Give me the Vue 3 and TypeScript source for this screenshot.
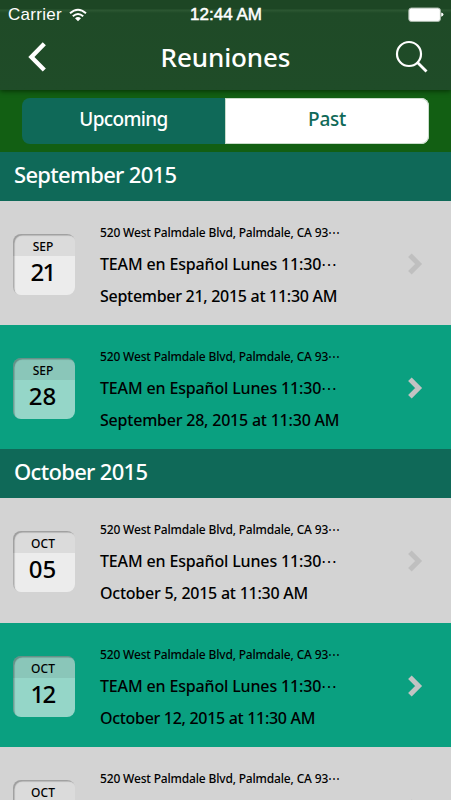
<script setup lang="ts">
interface Meeting {
  month: string
  day?: string
  address: string
  title?: string
  when?: string
}

interface Section {
  label: string
  meetings: Meeting[]
}

const address = '520 West Palmdale Blvd, Palmdale, CA 93⋯'
const title = 'TEAM en Español Lunes 11:30⋯'

const sections: Section[] = [
  {
    label: 'September 2015',
    meetings: [
      { month: 'SEP', day: '21', address, title, when: 'September 21, 2015 at 11:30 AM' },
      { month: 'SEP', day: '28', address, title, when: 'September 28, 2015 at 11:30 AM' },
    ],
  },
  {
    label: 'October 2015',
    meetings: [
      { month: 'OCT', day: '05', address, title, when: 'October 5, 2015 at 11:30 AM' },
      { month: 'OCT', day: '12', address, title, when: 'October 12, 2015 at 11:30 AM' },
      { month: 'OCT', address },
    ],
  },
]

// Narrow "1" digits: spread the saved width over the whole line.
function tracking(text: string): string {
  const ones = text.split('1').length - 1
  return `${((-0.135 * ones) / text.length).toFixed(4)}em`
}
</script>

<template>
  <main class="screen">
    <header class="header">
      <div class="status">
        <div class="carrier">
          <span>Carrier</span>
          <svg width="18" height="14" viewBox="0 0 18 14" fill="none" stroke="#fff" stroke-width="2">
            <path d="M1 5.2Q9 -1.8 17 5.2" />
            <path d="M3.8 8.2Q9 3.7 14.2 8.2" />
            <path d="M6 10.2Q9 7.8 12 10.2L9 13.3Z" fill="#fff" stroke="none" />
          </svg>
        </div>
        <span class="clock">12:44 AM</span>
        <svg class="battery" width="36" height="16" viewBox="0 0 36 16">
          <rect x="0.8" y="1" width="31.6" height="13.4" rx="2.5" fill="#fff" stroke="#a9b8ab" />
          <path d="M33.2 5.5Q35.5 6 35.5 7.5T33.2 9.8Z" fill="#fff" />
        </svg>
      </div>
      <div class="nav">
        <svg width="20" height="32" viewBox="0 0 20 32" fill="none" stroke="#fff" stroke-width="4.4">
          <path d="M17.3 2.8L4.4 16L17.3 29" />
        </svg>
        <h1>Reuniones</h1>
        <svg width="34" height="34" viewBox="0 0 34 34" fill="none" stroke="#fff" stroke-width="2.2">
          <circle cx="14" cy="14" r="12" />
          <path d="M22.5 22.5L31.5 31.5" stroke-width="2.8" />
        </svg>
      </div>
    </header>

    <div class="tabs">
      <div class="segmented">
        <button class="tab upcoming" type="button">Upcoming</button>
        <button class="tab active" type="button">Past</button>
      </div>
    </div>

    <section v-for="section in sections" :key="section.label">
      <h2>{{ section.label }}</h2>
      <article v-for="(meeting, index) in section.meetings" :key="index" class="row">
        <div class="date">
          <div class="month">{{ meeting.month }}</div>
          <div v-if="meeting.day" class="day" :style="{ letterSpacing: tracking(meeting.day) }">{{ meeting.day }}</div>
        </div>
        <div class="details">
          <p class="address">{{ meeting.address }}</p>
          <p v-if="meeting.title" class="title" :style="{ letterSpacing: tracking(meeting.title) }">{{ meeting.title }}</p>
          <p v-if="meeting.when" class="when" :style="{ letterSpacing: tracking(meeting.when) }">{{ meeting.when }}</p>
        </div>
        <svg class="chevron" width="16" height="24" viewBox="0 0 16 24" fill="none" stroke-width="5">
          <path d="M2.9 3.2L11.6 12L2.9 20.8" />
        </svg>
      </article>
    </section>
  </main>
</template>

<style>
body {
  overflow: hidden;
}
</style>

<style scoped>
.screen {
  height: 800px;
  overflow: hidden;
  background: #d3d3d3;
  font-family: "Noto Sans", "Open Sans", sans-serif;
  font-weight: 500;
  color: #000;
}

h1,
h2,
p {
  margin: 0;
  font-weight: 500;
  white-space: nowrap;
}

.header {
  position: relative;
  height: 90px;
  background: linear-gradient(#1d4624 0 9px, #2d5833 10px, #1f4a27 13px, #1f4c28);
  box-shadow: 0 1px 5px rgba(0, 30, 0, 0.75);
  color: #fff;
}

.status {
  display: grid;
  grid-template-columns: 1fr auto 1fr;
  align-items: center;
  height: 29px;
  padding: 0 7px 0 8px;
  box-sizing: border-box;
  font: 17px "Liberation Sans", sans-serif;
}

.carrier {
  display: flex;
  align-items: center;
  gap: 7px;
  letter-spacing: 0.3px;
}

.clock {
  font-weight: 400;
  -webkit-text-stroke: 0.5px #fff;
}

.battery {
  justify-self: end;
}

.nav {
  display: grid;
  grid-template-columns: 60px 1fr 60px;
  align-items: center;
  height: 56px;
  padding: 0 22px 0 27px;
}

.nav > svg:last-child {
  justify-self: end;
}

h1 {
  padding-right: 5px;
  text-align: center;
  font-size: 26px;
  letter-spacing: -0.1px;
  line-height: 55px;
}

.tabs {
  height: 62px;
  padding: 8px 22px 0;
  box-sizing: border-box;
  background: #125f13;
}

.segmented {
  display: grid;
  grid-template-columns: 203px 204px;
  height: 46px;
}

.tab {
  padding: 0 0 4px;
  border: 0;
  border-radius: 8px 0 0 8px;
  background: #0f6958;
  color: #fff;
  font: 500 19px "Noto Sans", sans-serif;
}

.upcoming {
  letter-spacing: -0.65px;
}

.tab.active {
  border-radius: 0 8px 8px 0;
  background: #fff;
  color: #0f6958;
  letter-spacing: -0.3px;
  box-shadow: inset 0 0 0 1px #c9dccb;
}

h2 {
  height: 49px;
  padding-left: 14px;
  background: #0f6958;
  color: #fff;
  font-size: 22px;
  letter-spacing: -0.68px;
  line-height: 45px;
}

.row {
  display: grid;
  grid-template-columns: 62px 1fr 16px;
  column-gap: 25px;
  height: 124.2px;
  padding: 0 28px 0 13px;
  background: #d3d3d3;
}

.row:nth-of-type(even) {
  background: #0aa080;
}

.date {
  height: 61px;
  margin-top: 33px;
  border-radius: 8px;
  overflow: hidden;
  background: rgba(255, 255, 255, 0.57);
  box-shadow: inset 1.5px 1.5px 1px rgba(0, 0, 0, 0.28);
  text-align: center;
}

.month {
  height: 22px;
  padding-right: 2px;
  background: rgba(0, 0, 0, 0.07);
  font-size: 12px;
  line-height: 25px;
}

.day {
  padding-right: 3px;
  font-size: 24px;
  line-height: 32px;
}

.address {
  margin-top: 23px;
  font-size: 12px;
  letter-spacing: -0.17px;
  line-height: 18px;
}

.title,
.when {
  font-size: 16px;
  line-height: 32px;
}

.title {
  margin-top: 6px;
}

.chevron {
  margin-top: 51px;
  stroke: #bfbfbf;
}

.row:nth-of-type(even) .chevron {
  stroke: #c3c3c3;
}
</style>
